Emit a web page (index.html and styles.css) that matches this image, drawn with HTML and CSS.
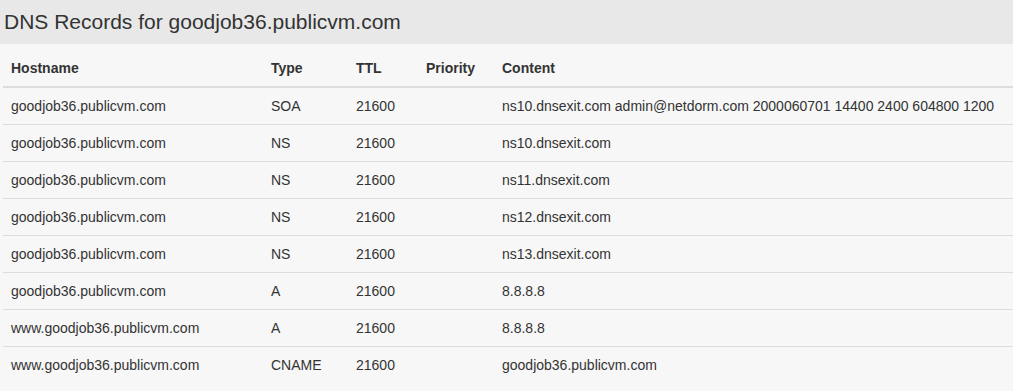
FILE: index.html
```html
<!DOCTYPE html>
<html>
<head>
<meta charset="utf-8">
<link rel="stylesheet" href="styles.css">
</head>
<body>
<div class="panel">
  <div class="panel-heading">DNS Records for goodjob36.publicvm.com</div>
  <div class="panel-body">
    <table class="records">
      <thead>
        <tr><th class="c-host">Hostname</th><th class="c-type">Type</th><th class="c-ttl">TTL</th><th class="c-prio">Priority</th><th>Content</th></tr>
      </thead>
      <tbody>
        <tr><td>goodjob36.publicvm.com</td><td>SOA</td><td>21600</td><td></td><td>ns10.dnsexit.com admin@netdorm.com 2000060701 14400 2400 604800 1200</td></tr>
        <tr><td>goodjob36.publicvm.com</td><td>NS</td><td>21600</td><td></td><td>ns10.dnsexit.com</td></tr>
        <tr><td>goodjob36.publicvm.com</td><td>NS</td><td>21600</td><td></td><td>ns11.dnsexit.com</td></tr>
        <tr><td>goodjob36.publicvm.com</td><td>NS</td><td>21600</td><td></td><td>ns12.dnsexit.com</td></tr>
        <tr><td>goodjob36.publicvm.com</td><td>NS</td><td>21600</td><td></td><td>ns13.dnsexit.com</td></tr>
        <tr><td>goodjob36.publicvm.com</td><td>A</td><td>21600</td><td></td><td>8.8.8.8</td></tr>
        <tr><td>www.goodjob36.publicvm.com</td><td>A</td><td>21600</td><td></td><td>8.8.8.8</td></tr>
        <tr><td>www.goodjob36.publicvm.com</td><td>CNAME</td><td>21600</td><td></td><td>goodjob36.publicvm.com</td></tr>
      </tbody>
    </table>
  </div>
</div>
</body>
</html>
```
FILE: styles.css
```css
html, body {
  margin: 0;
  padding: 0;
  background: #f7f7f7;
}
body {
  font-family: "Liberation Sans", Arial, Helvetica, sans-serif;
  font-size: 14px;
  line-height: 20px;
  color: #333;
}
.panel {
  background: #f7f7f7;
}
.panel-heading {
  background: #e8e8e8;
  height: 44px;
  box-sizing: border-box;
  padding: 9px 4px 0;
  font-size: 21px;
  line-height: 26px;
  color: #333;
}
.panel-body {
  padding: 6px 0 0 3px;
}
.records {
  width: 100%;
  border-collapse: collapse;
  border-spacing: 0;
}
.records th,
.records td {
  text-align: left;
  padding: 8px;
  line-height: 20px;
  vertical-align: top;
  white-space: nowrap;
}
.records th {
  font-weight: bold;
  border-bottom: 2px solid #ddd;
}
.records td {
  border-top: 1px solid #ddd;
}
.c-host { width: 244px; }
.c-type { width: 69px; }
.c-ttl { width: 54px; }
.c-prio { width: 60px; }
```
